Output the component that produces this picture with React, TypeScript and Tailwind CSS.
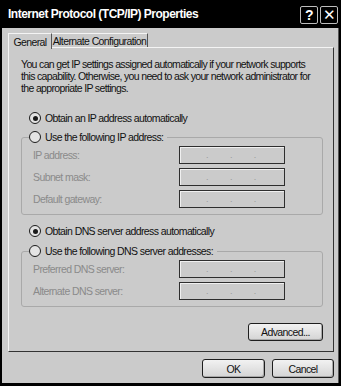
import React from 'react';

const font = { fontFamily: '"Liberation Sans", Arial, sans-serif' };

function Radio({ checked, label, disabled }: { checked?: boolean; label: string; disabled?: boolean }) {
  return (
    <div className="flex items-center gap-[4px] h-[14px]">
      <span className="w-[12px] h-[12px] rounded-full border border-[#1c1c1c] bg-[#e4e4e4] flex items-center justify-center">
        {checked && <span className="w-[5px] h-[5px] rounded-full bg-[#1a1a1a]" />}
      </span>
      <span className={disabled ? 'text-[#888]' : 'text-[#111]'}>{label}</span>
    </div>
  );
}

function IpBox() {
  return (
    <div className="w-[106px] h-[18px] border border-[#2e2e2e] shadow-[inset_1px_1px_0_#f0f0f0] bg-[#cbcbcb] flex items-center pl-[26px] gap-[22px] text-[#999] text-[9px] leading-none">
      <span>.</span>
      <span>.</span>
      <span>.</span>
    </div>
  );
}

function IpRow({ label }: { label: string }) {
  return (
    <div className="flex items-center justify-between h-[18px]">
      <span className="text-[#8a8a8a]">{label}</span>
      <IpBox />
    </div>
  );
}

function Button({ label, className }: { label: string; className: string }) {
  return (
    <div
      className={
        'flex items-center justify-center rounded-[3px] border border-[#1e1e1e] bg-gradient-to-b from-[#f2f2f2] to-[#d4d4d4] shadow-[inset_-1px_-1px_0_#a8a8a8] text-[#111] ' +
        className
      }
    >
      {label}
    </div>
  );
}

export default function App() {
  return (
    <div className="w-[341px] h-[386px] bg-black flex flex-col px-[2px] pb-[3px] text-[10.5px] leading-[12px] tracking-[-0.6px]" style={font}>
      <div className="h-[28px] flex items-center justify-between pl-[6px] pr-[1px]">
        <span className="text-white font-bold text-[12px] tracking-[-0.5px]">Internet Protocol (TCP/IP) Properties</span>
        <div className="flex gap-[2px] mt-[1px]">
          <span className="w-[18px] h-[18px] rounded-[2px] border border-[#bdbdbd] text-white text-[14px] font-bold flex items-center justify-center leading-none">?</span>
          <span className="w-[18px] h-[18px] rounded-[2px] border border-[#bdbdbd] text-white text-[15px] flex items-center justify-center leading-none">✕</span>
        </div>
      </div>

      <div className="flex-1 bg-[#cbcbcb] border-r border-[#555] flex flex-col pl-[6px] pr-[4px] pt-[4px]">
        <div className="flex items-end h-[15px]">
          <div className="h-[16px] w-[44px] border-t border-l border-r border-t-[#f4f4f4] border-l-[#f4f4f4] border-r-[#555] bg-[#cbcbcb] flex items-center justify-center text-[#111] relative top-[1px] z-10 -mb-[1px]">
            General
          </div>
          <div className="h-[14px] w-[96px] border-t border-r border-t-[#f4f4f4] border-r-[#555] flex items-center justify-center text-[#111] whitespace-nowrap">
            Alternate Configuration
          </div>
        </div>

        <div className="h-[305px] border border-t-[#f4f4f4] border-l-[#f4f4f4] border-r-[#333] border-b-[#333] flex flex-col pl-[12px] pr-[10px] pt-[10px]">
          <p className="text-[#111] whitespace-nowrap tracking-[-0.65px]">
            You can get IP settings assigned automatically if your network supports
            <br />
            this capability. Otherwise, you need to ask your network administrator for
            <br />
            the appropriate IP settings.
          </p>

          <div className="mt-[17px] pl-[8px]">
            <Radio checked label="Obtain an IP address automatically" />
          </div>

          <fieldset className="mt-[5px] border border-[#a9a9a9] rounded-[3px] pl-[11px] pr-[37px] pb-[6px] pt-[2px]">
            <legend className="ml-[-4px] pr-[4px]">
              <Radio label="Use the following IP address:" />
            </legend>
            <div className="flex flex-col gap-[4px]">
              <IpRow label="IP address:" />
              <IpRow label="Subnet mask:" />
              <IpRow label="Default gateway:" />
            </div>
          </fieldset>

          <div className="mt-[9px] pl-[8px]">
            <Radio checked label="Obtain DNS server address automatically" />
          </div>

          <fieldset className="mt-[6px] border border-[#a9a9a9] rounded-[3px] pl-[11px] pr-[37px] pb-[6px] pt-[2px]">
            <legend className="ml-[-4px] pr-[4px]">
              <Radio label="Use the following DNS server addresses:" />
            </legend>
            <div className="flex flex-col gap-[4px]">
              <IpRow label="Preferred DNS server:" />
              <IpRow label="Alternate DNS server:" />
            </div>
          </fieldset>

          <div className="flex justify-end mt-[16px]">
            <Button label="Advanced..." className="w-[75px] h-[18px]" />
          </div>
        </div>

        <div className="flex justify-end gap-[7px] mt-[7px]">
          <Button label="OK" className="w-[63px] h-[19px]" />
          <Button label="Cancel" className="w-[62px] h-[19px]" />
        </div>
      </div>
    </div>
  );
}
